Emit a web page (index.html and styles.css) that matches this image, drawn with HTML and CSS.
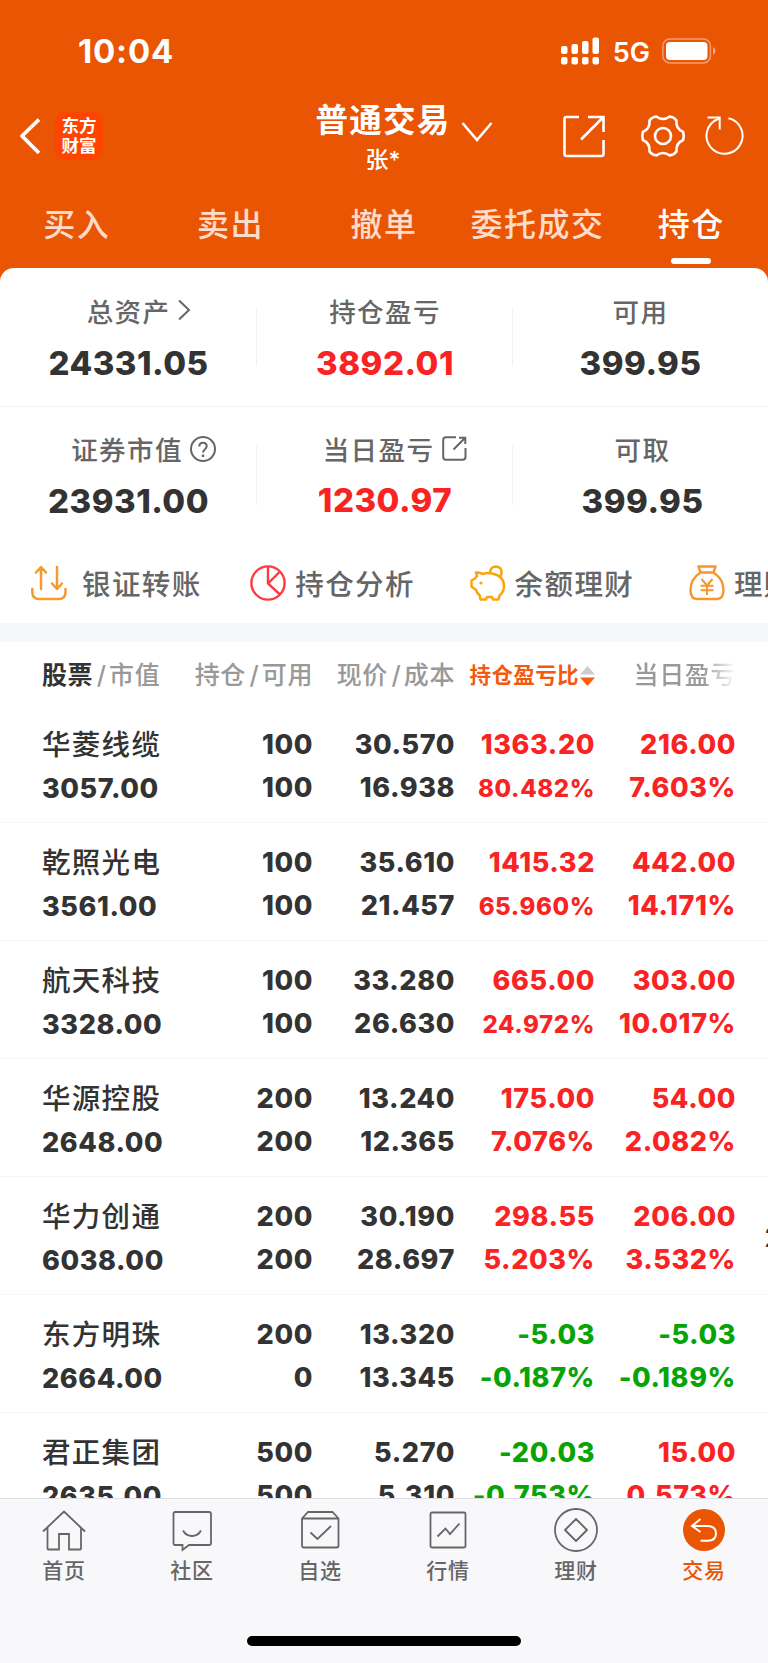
FILE: index.html
```
<!DOCTYPE html>
<html lang="zh-CN">

<head>
  <meta charset="UTF-8">
  <meta name="viewport" content="width=device-width, initial-scale=1.0">
  <title>普通交易 - 持仓</title>
  <link rel="stylesheet" href="styles.css">
</head>

<body>
  <div class="page">
    <!-- 顶部区域 -->
    <header class="top">
      <div class="status-bar">
        <span class="time">10:04</span>
        <div class="status-right">
          <svg class="signal" width="40" height="28" viewBox="0 0 40 28" fill="#fff">
            <rect x="1" y="9" width="6.5" height="8" rx="2" />
            <rect x="11.5" y="7" width="6.5" height="10" rx="2" />
            <rect x="22" y="4" width="6.5" height="13" rx="2" />
            <rect x="32.5" y="0.5" width="6.5" height="16.5" rx="2" />
            <rect x="1" y="20" width="6.5" height="7.5" rx="2" />
            <rect x="11.5" y="20" width="6.5" height="7.5" rx="2" />
            <rect x="22" y="20" width="6.5" height="7.5" rx="2" />
            <rect x="32.5" y="20" width="6.5" height="7.5" rx="2" />
          </svg>
          <span class="network">5G</span>
          <svg width="54" height="26" viewBox="0 0 54 26">
            <rect x="0.9" y="0.9" width="47.5" height="24" rx="7" fill="none" stroke="#fff" stroke-opacity="0.42" stroke-width="1.5" />
            <rect x="4" y="4" width="41.5" height="18" rx="4" fill="#fff" />
            <path d="M51 9q2.500 1.500 2.500 4t-2.500 4z" fill="#fff" fill-opacity="0.5" />
          </svg>
        </div>
      </div>

      <div class="title-bar">
        <svg class="back" width="22" height="38" viewBox="0 0 22 38" fill="none" stroke="#fff" stroke-width="3.800">
          <path d="M20 2.500L3 19L20 36" stroke-linejoin="round" />
        </svg>
        <div class="logo">东方<br>财富</div>
        <div class="title">
          <h1>普通交易</h1>
          <p>张*</p>
        </div>
        <svg class="arrow-down" width="32" height="22" viewBox="0 0 32 22" fill="none" stroke="#fff" stroke-width="2.600">
          <path d="M1.500 2L16 19L30.500 2" />
        </svg>
        <svg class="share" width="44" height="44" viewBox="0 0 44 44" fill="none" stroke="#fff" stroke-width="2.600">
          <path d="M17 3H4.500Q2.500 3 2.500 5V40Q2.500 42 4.500 42H39.500Q41.500 42 41.500 40V26M26 3H41.500V18M41.500 3L19 25.500" />
        </svg>
        <svg class="gear" width="46" height="46" viewBox="-23 -23 46 46" fill="none" stroke="#fff" stroke-width="2.600" stroke-linejoin="round">
          <path d="M20.200 -4Q21.200 0 20.200 4Q12.600 7.200 13.500 15.600Q11 19 6.700 19.500Q0 14.500 -6.700 19.500Q-11 19 -13.500 15.600Q-12.600 7.200 -20.200 4Q-21.200 0 -20.200 -4Q-12.600 -7.200 -13.500 -15.600Q-11 -19 -6.700 -19.500Q0 -14.500 6.700 -19.500Q11 -19 13.500 -15.600Q12.600 -7.200 20.200 -4Z" />
          <circle r="8" />
        </svg>
        <svg class="refresh" width="40" height="42" viewBox="0 0 40 42" fill="none" stroke="#fff" stroke-width="2">
          <path d="M24.500 3.200A18 18 0 1 1 14 4L15.500 3" />
          <path d="M3.500 2.500H15.700V14.500" />
        </svg>
      </div>

      <nav class="tabs">
        <a>买入</a>
        <a>卖出</a>
        <a>撤单</a>
        <a>委托成交</a>
        <a class="active">持仓</a>
      </nav>
    </header>

    <!-- 资产概览 -->
    <section class="assets">
      <div class="asset-row">
        <div class="asset">
          <div class="label more-label">总资产<svg class="more" width="14" height="22" viewBox="0 0 14 22" fill="none" stroke="#666" stroke-width="2"><path d="M2 1.500L12 11L2 20.500" /></svg></div>
          <div class="value">24331.05</div>
        </div>
        <div class="asset">
          <div class="label">持仓盈亏</div>
          <div class="value red">3892.01</div>
        </div>
        <div class="asset">
          <div class="label">可用</div>
          <div class="value">399.95</div>
        </div>
      </div>
      <div class="asset-row">
        <div class="asset">
          <div class="label help-label">证券市值<svg class="help" width="26" height="26" viewBox="0 0 26 26" fill="none" stroke="#666" stroke-width="2"><circle cx="13" cy="13" r="12" /><path d="M9.300 10.500Q9.300 6.800 13 6.800T16.700 10.300Q16.700 12 15 13.200T13 16.500" /><path d="M13 18.500V21" stroke-width="2.400" /></svg></div>
          <div class="value">23931.00</div>
        </div>
        <div class="asset">
          <div class="label out-label">当日盈亏<svg class="out" width="25" height="25" viewBox="0 0 25 25" fill="none" stroke="#666" stroke-width="2"><path d="M14 1.200H4Q1.200 1.200 1.200 4V21Q1.200 23.800 4 23.800H20.500Q23.500 23.800 23.500 21V12M17 1.800H23.300V8M23 2L11.500 13.500" /></svg></div>
          <div class="value red today">1230.97</div>
        </div>
        <div class="asset last">
          <div class="label">可取</div>
          <div class="value">399.95</div>
        </div>
      </div>
    </section>

    <!-- 快捷入口 -->
    <section class="actions">
      <a class="transfer">
        <svg width="36" height="36" viewBox="0 0 36 36" fill="none" stroke="#f59a2c" stroke-width="2.500" stroke-linecap="round" stroke-linejoin="round">
          <path d="M1.300 24V27Q1.300 34 8.300 34H27.500Q34.500 34 34.500 27V24M10 24V2.500M5 7.500L10 2L15 7.500M26 2V23.500M21 18.500L26 24L31 18.500" />
        </svg>
        <span>银证转账</span>
      </a>
      <a class="analysis">
        <svg width="36" height="36" viewBox="0 0 36 36" fill="none" stroke="#fd3a42" stroke-width="2.400">
          <circle cx="18" cy="18" r="16.600" />
          <path d="M18 1.500V18.500L30 29.500M18 18.500L29.500 7" />
        </svg>
        <span>持仓分析</span>
      </a>
      <a class="balance">
        <svg width="36" height="36" viewBox="0 0 36 36" fill="none" stroke="#fba50c" stroke-width="2.500" stroke-linejoin="round">
          <path d="M6 7.500Q10 7 12.500 9Q17 7.500 22 8.500Q34 11 34 21Q34 27 29.500 30.500L28.500 34.500H23L22 32H17L16 34.500H10.500L9.500 30Q7 28 6 25L1.500 21.500V15.500L5 13.500L7 11Z" />
          <path d="M20 8Q20.500 1.500 26 1.500Q32 2 31.500 8Q31 11 30 12.500" />
          <circle cx="11" cy="18" r="1.600" fill="#fba50c" stroke="none" />
        </svg>
        <span>余额理财</span>
      </a>
      <a class="wealth">
        <svg width="36" height="36" viewBox="0 0 36 36" fill="none" stroke="#f9952a" stroke-width="2.400" stroke-linejoin="round">
          <path d="M11.500 7.500L9.500 1.500H26.500L24.500 7.500Z" />
          <path d="M11.500 7.500Q1.500 14 1.500 25Q1.500 34 8 34H28Q34.500 34 34.500 25Q34.500 14 24.500 7.500" />
          <path d="M12.500 14L18 20.500L23.500 14M18 20.500V30M11.500 20.700H24.500M11.500 25.200H24.500" stroke-width="2" />
        </svg>
        <span>理财</span>
      </a>
    </section>

    <!-- 持仓列表 -->
    <section class="holdings">
      <div class="row head">
        <div><b>股票</b><i>/</i>市值</div>
        <div>持仓<i>/</i>可用</div>
        <div>现价<i>/</i>成本</div>
        <div class="sort">持仓盈亏比<svg width="15" height="20" viewBox="0 0 15 20"><path d="M7.500 0L15 8.500H0Z" fill="#ccc" /><path d="M0 11.500H15L7.500 20Z" fill="#fb5e12" /></svg></div>
        <div class="fade">当日盈亏</div>
      </div>
      <div class="row">
        <div class="name">华菱线缆<br><span>3057.00</span></div>
        <div>100<br>100</div>
        <div>30.570<br>16.938</div>
        <div class="red">1363.20<br><small>80.482%</small></div>
        <div class="red">216.00<br>7.603%</div>
      </div>
      <div class="row">
        <div class="name">乾照光电<br><span>3561.00</span></div>
        <div>100<br>100</div>
        <div>35.610<br>21.457</div>
        <div class="red">1415.32<br><small>65.960%</small></div>
        <div class="red">442.00<br>14.171%</div>
      </div>
      <div class="row">
        <div class="name">航天科技<br><span>3328.00</span></div>
        <div>100<br>100</div>
        <div>33.280<br>26.630</div>
        <div class="red">665.00<br><small>24.972%</small></div>
        <div class="red">303.00<br>10.017%</div>
      </div>
      <div class="row">
        <div class="name">华源控股<br><span>2648.00</span></div>
        <div>200<br>200</div>
        <div>13.240<br>12.365</div>
        <div class="red">175.00<br>7.076%</div>
        <div class="red">54.00<br>2.082%</div>
      </div>
      <div class="row">
        <div class="name">华力创通<br><span>6038.00</span></div>
        <div>200<br>200</div>
        <div>30.190<br>28.697</div>
        <div class="red">298.55<br>5.203%</div>
        <div class="red">206.00<br>3.532%</div>
        <div class="next">2</div>
      </div>
      <div class="row">
        <div class="name">东方明珠<br><span>2664.00</span></div>
        <div>200<br>0</div>
        <div>13.320<br>13.345</div>
        <div class="green">-5.03<br>-0.187%</div>
        <div class="green">-5.03<br>-0.189%</div>
      </div>
      <div class="row">
        <div class="name">君正集团<br><span>2635.00</span></div>
        <div>500<br>500</div>
        <div>5.270<br>5.310</div>
        <div class="green">-20.03<br>-0.753%</div>
        <div class="red">15.00<br>0.573%</div>
      </div>
    </section>

    <!-- 底部导航 -->
    <footer class="bottom">
      <div class="menu">
        <a>
          <svg width="46" height="46" viewBox="0 0 46 46" fill="none" stroke="#666" stroke-width="1.800">
            <path d="M2 24.500L23 4.500L44 24.500M6.500 21V41.500Q6.500 42.500 7.500 42.500H18V27H28V42.500H39Q40 42.500 40 41.500V21" />
          </svg>
          首页
        </a>
        <a>
          <svg width="46" height="46" viewBox="0 0 46 46" fill="none" stroke="#666" stroke-width="1.800">
            <path d="M6 5H40Q42 5 42 7V36Q42 38 40 38H20L13.500 43V38H6Q4.500 38 4.500 36V7Q4.500 5 6 5ZM14 23.500Q17 29 23 29T32 23.500" />
          </svg>
          社区
        </a>
        <a>
          <svg width="46" height="46" viewBox="0 0 46 46" fill="none" stroke="#666" stroke-width="1.800">
            <path d="M5 11.500L11 5H35.500L41.500 11.500V38.500Q41.500 40.500 39.500 40.500H7Q5 40.500 5 38.500ZM5 11.500H41.500M13.500 25.500L20.500 32L34 19" />
          </svg>
          自选
        </a>
        <a>
          <svg width="46" height="46" viewBox="0 0 46 46" fill="none" stroke="#666" stroke-width="1.800">
            <rect x="5.500" y="5.500" width="35" height="35" rx="1.500" />
            <path d="M12.500 29.500L20.500 21.500L25 27L34.500 16.500" />
          </svg>
          行情
        </a>
        <a>
          <svg width="46" height="46" viewBox="0 0 46 46" fill="none" stroke="#666" stroke-width="1.800">
            <circle cx="23" cy="23" r="21" />
            <path d="M23 12L34 23L23 34L12 23Z" stroke-linejoin="round" />
          </svg>
          理财
        </a>
        <a class="active">
          <svg width="46" height="46" viewBox="0 0 46 46" fill="none" stroke="#fff" stroke-width="2">
            <circle cx="23" cy="23" r="21" fill="#ea5504" stroke="none" />
            <path d="M19.500 12L11 19L19.500 25M11 19H27Q35 19.500 35 26.500T27 33.800H19.500" />
          </svg>
          交易
        </a>
      </div>
      <div class="home-bar"></div>
    </footer>
  </div>
</body>

</html>
```

FILE: styles.css
```
/* 全局样式 */
* {
  box-sizing: border-box;
}

body {
  margin: 0;
  background: #fff;
  color: #333;
  font-family: Inter, "Noto Sans CJK SC", sans-serif;
  font-weight: 500;
}

svg {
  display: block;
  flex-shrink: 0;
}

h1,
p {
  margin: 0;
}

.page {
  width: 768px;
  height: 1663px;
  display: flex;
  flex-direction: column;
  overflow: hidden;
}

.red {
  color: #fa2323;
}

.green {
  color: #08a306;
}

/* 顶部区域 */
.top {
  height: 288px;
  margin-bottom: -20px;
  flex-shrink: 0;
  background: #ea5504;
  color: #fff;
}

.status-bar {
  height: 96px;
  padding: 6px 52px 0 78px;
  display: flex;
  justify-content: space-between;
  align-items: center;
}

.time {
  font-size: 33px;
  font-weight: 700;
  letter-spacing: 0.8px;
}

.status-right {
  display: flex;
  align-items: center;
}

.network {
  margin: 3px 12px 0 13px;
  font-size: 27px;
  font-weight: 600;
  line-height: 28px;
}

/* 标题栏 */
.title-bar {
  height: 80px;
  padding-left: 19px;
  display: flex;
  align-items: center;
}

.logo {
  width: 48px;
  height: 48px;
  margin-left: 14px;
  padding-top: 4px;
  border-radius: 10px;
  background: #ff4400;
  font-size: 17.5px;
  font-weight: 700;
  line-height: 20px;
  text-align: center;
}

.title {
  width: 136px;
  margin: 3px 0 0 212px;
  text-align: center;
  white-space: nowrap;
}

.title h1 {
  font-size: 32.5px;
  font-weight: 600;
  line-height: 45px;
  letter-spacing: 1.2px;
}

.title p {
  font-size: 23px;
  font-weight: 500;
  line-height: 35px;
}

.arrow-down {
  margin: -8px 0 0 10px;
}

.share {
  margin-left: 69px;
}

.gear {
  margin-left: 34px;
}

.refresh {
  margin-left: 18px;
}

/* 交易标签 */
.tabs {
  height: 92px;
  display: grid;
  grid-template-columns: repeat(5, 1fr);
  font-size: 32px;
  letter-spacing: 1.5px;
  line-height: 98px;
  text-align: center;
}

.tabs a {
  color: #fedccb;
}

.tabs .active {
  color: #fff;
}

.tabs .active::after {
  content: "";
  display: block;
  width: 40px;
  height: 6px;
  margin: -16px auto 0;
  border-radius: 3px;
  background: #fff;
}

/* 资产概览 */
.assets {
  flex-shrink: 0;
  position: relative;
  border-radius: 14px 14px 0 0;
  background: #fff;
}

.asset-row {
  height: 138px;
  display: grid;
  grid-template-columns: 257px 256px 255px;
}

.asset-row + .asset-row {
  border-top: 1px solid #f3f3f3;
}

.asset {
  padding-top: 22px;
  background: linear-gradient(#f1f1f1, #f1f1f1) right 39px / 1px 59px no-repeat;
}

.asset:last-child {
  background: none;
}

.label {
  height: 40px;
  display: flex;
  justify-content: center;
  align-items: center;
  color: #666;
  font-size: 26.5px;
  letter-spacing: 1.4px;
}

.asset-row + .asset-row .label {
  height: 39px;
}

.more {
  margin-left: 7px;
}

.help {
  margin-left: 7px;
}

.out {
  margin-left: 8px;
}

.more-label {
  padding-left: 21px;
}

.help-label {
  padding-left: 30px;
}

.out-label {
  padding-left: 20px;
}

.value {
  margin-top: 6px;
  font-size: 33px;
  font-weight: 800;
  line-height: 54px;
  letter-spacing: 0.5px;
  text-align: center;
}

.value.today {
  margin-top: 5px;
}

.last {
  padding-left: 4px;
}

/* 快捷入口 */
.actions {
  height: 79px;
  flex-shrink: 0;
  padding: 0 0 2px 31px;
  display: flex;
  align-items: center;
  color: #666;
  font-size: 28.5px;
  letter-spacing: 1.4px;
  white-space: nowrap;
}

.actions a {
  display: flex;
  align-items: center;
  width: 219.300px;
  flex-shrink: 0;
  gap: 9px;
}

.actions .transfer {
  gap: 15px;
}

/* 持仓列表 */
.holdings {
  flex: 1;
  min-height: 0;
  overflow: hidden;
  border-top: 19px solid #f5f7f9;
}

.row {
  height: 118px;
  padding: 18px 0 0 42px;
  display: grid;
  grid-template-columns: 151px 120px 142px 140px 141px 32px;
  border-bottom: 1px solid #f5f5f5;
  font-size: 27px;
  font-weight: 800;
  line-height: 43px;
  letter-spacing: 0.6px;
  text-align: right;
  white-space: nowrap;
}

.row .name {
  font-size: 28.5px;
  font-weight: 500;
  letter-spacing: 1.3px;
  text-align: left;
}

.name span {
  font-size: 27px;
  font-weight: 800;
  letter-spacing: 0.6px;
}

.row small {
  font-size: 24px;
}

.next {
  padding: 21px 0 0 28px;
  font-weight: 400;
  text-align: left;
  overflow: hidden;
}

.head {
  height: 63px;
  padding-top: 12px;
  border: none;
  color: #999;
  font-size: 25px;
  font-weight: 500;
  letter-spacing: 0.6px;
}

.head div:first-child {
  text-align: left;
}

.head b {
  color: #333;
  font-weight: 600;
}

.head i {
  margin: 0 2.500px 0 3.500px;
  font-style: normal;
}

.head .sort {
  height: 43px;
  display: flex;
  justify-content: flex-end;
  align-items: center;
  color: #f5590e;
  font-size: 21.5px;
  font-weight: 600;
  letter-spacing: 0.4px;
}

.sort svg {
  margin-left: 1px;
}

.fade {
  -webkit-mask: linear-gradient(to right, #000 108px, transparent 141px);
  mask: linear-gradient(to right, #000 108px, transparent 141px);
}

/* 底部导航 */
.bottom {
  height: 165px;
  flex-shrink: 0;
  border-top: 1px solid #dcdfe5;
  background: #f8f8fb;
}

.menu {
  height: 137px;
  padding-top: 8px;
  display: grid;
  grid-template-columns: repeat(6, 1fr);
}

.menu a {
  display: flex;
  flex-direction: column;
  align-items: center;
  color: #666;
  font-size: 21px;
  letter-spacing: 0.8px;
  line-height: 36px;
}

.menu .active {
  color: #ea5504;
}

.home-bar {
  width: 274px;
  height: 10px;
  margin: 0 auto;
  border-radius: 5px;
  background: #000;
}
```
